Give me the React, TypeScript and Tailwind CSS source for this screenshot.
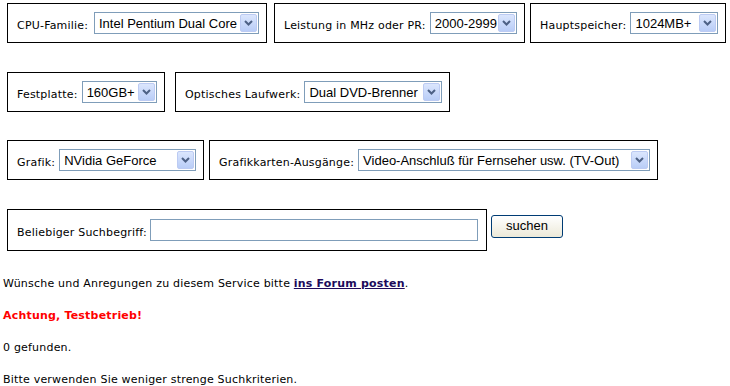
import { ReactNode } from "react";

const Chevron = () => (
  <svg width="9" height="6" viewBox="0 0 9 6">
    <path d="M1 1 L4.5 4.5 L8 1" fill="none" stroke="#4d6185" strokeWidth="2" />
  </svg>
);

const FakeSelect = ({ value, className }: { value: string; className: string }) => (
  <div className={`flex h-[22px] items-stretch border border-[#7f9db9] bg-white ${className}`}>
    <span className="flex-1 overflow-hidden whitespace-nowrap pl-[4px] pt-[2px] font-['Liberation_Sans',Arial,sans-serif] text-[13px] leading-[18px] tracking-normal text-black">
      {value}
    </span>
    <span className="m-px flex w-[17px] items-center justify-center rounded-[2px] border border-[#bccbf3] bg-gradient-to-b from-[#dbe6fd] to-[#b9cdf7]">
      <Chevron />
    </span>
  </div>
);

const Box = ({ className, children }: { className: string; children: ReactNode }) => (
  <div className={`flex items-end border border-black py-[8px] pl-[9px] pr-[7px] ${className}`}>
    {children}
  </div>
);

const Label = ({ children }: { children: ReactNode }) => (
  <span className="mr-auto whitespace-nowrap pb-[2px] pr-[4px] text-[11px] leading-[13px] text-black">{children}</span>
);

export default function App() {
  return (
    <div className="min-h-[386px] bg-white pt-[3px] font-['DejaVu_Sans',Verdana,sans-serif] tracking-[0.2px]">
      <div className="flex pl-[7px]">
        <Box className="w-[260px]">
          <Label>CPU-Familie:</Label>
          <FakeSelect value="Intel Pentium Dual Core" className="w-[165px]" />
        </Box>
        <Box className="ml-[7px] w-[251px]">
          <Label>Leistung in MHz oder PR:</Label>
          <FakeSelect value="2000-2999" className="w-[88px]" />
        </Box>
        <Box className="ml-[5px] w-[196px]">
          <Label>Hauptspeicher:</Label>
          <FakeSelect value="1024MB+" className="w-[92px]" />
        </Box>
      </div>

      <div className="mt-[29px] flex pl-[7px]">
        <Box className="w-[158px]">
          <Label>Festplatte:</Label>
          <FakeSelect value="160GB+" className="w-[81px]" />
        </Box>
        <Box className="ml-[10px] w-[275px]">
          <Label>Optisches Laufwerk:</Label>
          <FakeSelect value="Dual DVD-Brenner" className="w-[138px]" />
        </Box>
      </div>

      <div className="mt-[28px] flex pl-[7px]">
        <Box className="w-[197px]">
          <Label>Grafik:</Label>
          <FakeSelect value="NVidia GeForce" className="w-[138px]" />
        </Box>
        <Box className="ml-[5px] w-[449px]">
          <Label>Grafikkarten-Ausgänge:</Label>
          <FakeSelect value="Video-Anschluß für Fernseher usw. (TV-Out)" className="w-[292px]" />
        </Box>
      </div>

      <div className="mt-[29px] flex items-start pl-[7px]">
        <div className="flex w-[480px] items-end border border-black py-[9px] pl-[9px] pr-[8px]">
          <span className="mr-auto whitespace-nowrap pb-[2px] text-[11px] leading-[13px] text-black">
            Beliebiger Suchbegriff:
          </span>
          <input type="text" className="h-[22px] w-[328px] border border-[#7f9db9] bg-white px-1 outline-none" />
        </div>
        <button className="ml-[4px] mt-[6px] h-[23px] w-[72px] rounded-[3px] border border-[#003c74] bg-gradient-to-b from-white to-[#ece9d8] pb-[1px] font-['Liberation_Sans',Arial,sans-serif] text-[13px] tracking-normal text-black">
          suchen
        </button>
      </div>

      <div className="pl-[3px] text-[11px] leading-[13px] text-black">
        <p className="mt-[26px]">
          Wünsche und Anregungen zu diesem Service bitte{" "}
          <a href="#" className="font-bold text-[#200a5a] underline">
            ins Forum posten
          </a>
          .
        </p>
        <p className="mt-[19px] font-bold text-[#ff0000]">Achtung, Testbetrieb!</p>
        <p className="mt-[19px]">0 gefunden.</p>
        <p className="mt-[19px]">Bitte verwenden Sie weniger strenge Suchkriterien.</p>
      </div>
    </div>
  );
}
